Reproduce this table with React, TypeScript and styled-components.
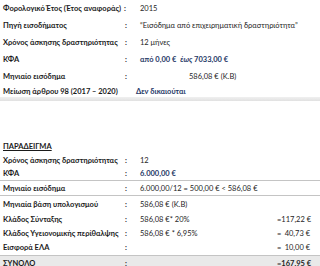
import React from "react";
import styled, { createGlobalStyle } from "styled-components";

const GlobalStyle = createGlobalStyle`
  html, body { margin: 0; padding: 0; background: #ffffff; }
  body { font-family: Lato, "Noto Sans", "DejaVu Sans", sans-serif; color: #1a1a1a; }
`;

const Page = styled.div`
  width: 320px;
  height: 266px;
  overflow: hidden;
  background: #fff;
  font-size: 7.5px;
`;

const Table = styled.div<{ $top?: number }>`
  display: flex;
  flex-direction: column;
  margin-top: ${(p) => p.$top ?? 0}px;
`;

const Row = styled.div<{ $h: number; $line?: boolean; $shade?: boolean }>`
  display: grid;
  grid-template-columns: 122px 15px 1fr;
  align-items: center;
  height: ${(p) => p.$h}px;
  box-sizing: border-box;
  padding-left: 3px;
  padding-right: 10px;
  border-bottom: ${(p) => (p.$line ? "1px solid #c4c4c4" : "none")};
  background: ${(p) => (p.$shade ? "#e9e9e9" : "transparent")};
  white-space: nowrap;
`;

const Label = styled.span`
  font-weight: 700;
`;

const Colon = styled.span<{ $shift?: number }>`
  font-weight: 700;
  margin-left: ${(p) => p.$shift ?? 0}px;
`;

const Value = styled.span<{ $blue?: boolean; $bold?: boolean; $indent?: number; $shift?: number }>`
  display: flex;
  align-items: center;
  color: ${(p) => (p.$blue ? "#1f3866" : "#1e1e1e")};
  font-weight: ${(p) => (p.$bold ? 700 : 400)};
  padding-left: ${(p) => p.$indent ?? 0}px;
  margin-left: ${(p) => p.$shift ?? 0}px;
`;

const Italic = styled.i`
  margin-left: 4px;
`;

const Band = styled.div`
  height: 4px;
  background: linear-gradient(#f0f0f0, #e1e1e1);
`;

const Heading = styled.div`
  height: 14px;
  display: flex;
  align-items: center;
  padding-left: 3px;
  font-weight: 700;
  text-decoration: underline;
`;

const Calc = styled.span`
  flex: 1;
`;

const Amount = styled.span<{ $bold?: boolean }>`
  display: flex;
  justify-content: space-between;
  width: 33px;
  font-weight: ${(p) => (p.$bold ? 700 : 400)};
`;

type Line = {
  label: string;
  value: React.ReactNode;
  colon?: boolean;
  blue?: boolean;
  bold?: boolean;
  indent?: number;
  shift?: number;
  colonShift?: number;
  h: number;
};

const first: Line[] = [
  { label: "Φορολογικό Έτος (Έτος αναφοράς)", value: "2015", colonShift: -1, h: 17 },
  { label: "Πηγή εισοδήματος", value: "\u201CΕισόδημα από επιχειρηματική δραστηριότητα\u201D", h: 17 },
  { label: "Χρόνος άσκησης δραστηριότητας", value: "12 μήνες", h: 17 },
  {
    label: "ΚΦΑ",
    value: (
      <>
        από 0,00 € <Italic>έως</Italic>&nbsp;7033,00 €
      </>
    ),
    blue: true,
    bold: true,
    h: 17,
  },
  { label: "Μηνιαίο εισόδημα", value: "586,08 € (Κ.Β)", indent: 49, h: 17 },
  {
    label: "Μείωση άρθρου 98 (2017 – 2020)",
    value: "Δεν δικαιούται",
    colon: false,
    blue: true,
    bold: true,
    shift: -4,
    h: 12,
  },
];

type Line2 = {
  label: string;
  value: string;
  blue?: boolean;
  bold?: boolean;
  h: number;
  line?: boolean;
  shade?: boolean;
  amount?: string;
};

const second: Line2[] = [
  { label: "Χρόνος άσκησης δραστηριότητας", value: "12", h: 14 },
  { label: "ΚΦΑ", value: "6.000,00 €", blue: true, bold: true, h: 14, line: true },
  { label: "Μηνιαίο εισόδημα", value: "6.000,00/12 = 500,00 € < 586,08 €", h: 15, line: true },
  { label: "Μηνιαία βάση υπολογισμού", value: "586,08 € (Κ.Β)", h: 16 },
  { label: "Κλάδος Σύνταξης", value: "586,08 €*  20%", h: 14, amount: "117,22 €" },
  { label: "Κλάδος Υγειονομικής περίθαλψης", value: "586,08 € * 6,95%", h: 14, amount: "40,73 €" },
  { label: "Εισφορά ΕΛΑ", value: "", h: 16, amount: "10,00 €", line: true },
  { label: "ΣΥΝΟΛΟ", value: "", h: 14, amount: "167,95 €", shade: true },
];

export default function App() {
  return (
    <Page>
      <GlobalStyle />
      <Table>
        {first.map((r, i) => (
          <Row key={i} $h={r.h}>
            <Label>{r.label}</Label>
            <Colon $shift={r.colonShift}>{r.colon === false ? "" : ":"}</Colon>
            <Value $blue={r.blue} $bold={r.bold} $indent={r.indent} $shift={r.shift}>
              {r.value}
            </Value>
          </Row>
        ))}
      </Table>
      <Band />
      <Table $top={38}>
        <Heading>ΠΑΡΑΔΕΙΓΜΑ</Heading>
        {second.map((r, i) => (
          <Row key={i} $h={r.h} $line={r.line} $shade={r.shade}>
            <Label>{r.label}</Label>
            <Colon>:</Colon>
            <Value $blue={r.blue} $bold={r.bold}>
              <Calc>{r.value}</Calc>
              {r.amount && (
                <Amount $bold={r.shade}>
                  <span>=</span>
                  <span>{r.amount}</span>
                </Amount>
              )}
            </Value>
          </Row>
        ))}
      </Table>
    </Page>
  );
}
